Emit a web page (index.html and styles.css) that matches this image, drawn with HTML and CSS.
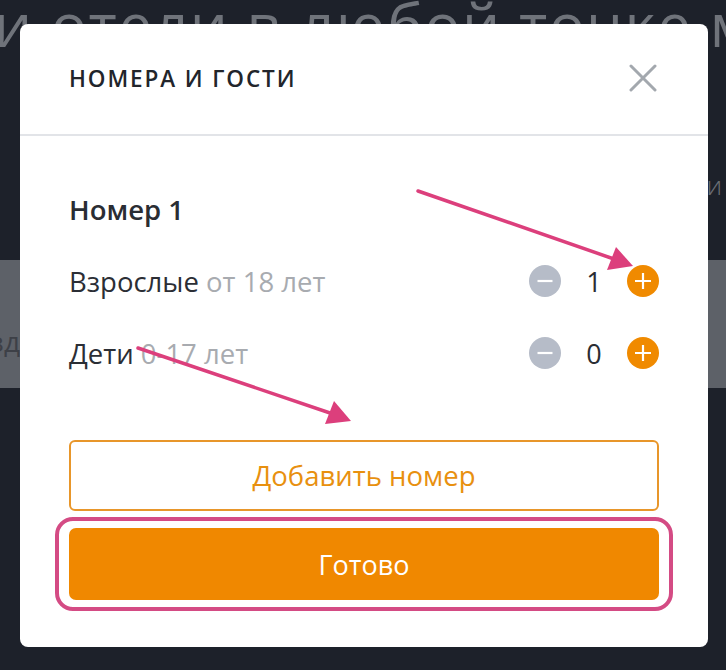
FILE: index.html
```html
<!DOCTYPE html>
<html lang="ru">
<head>
<meta charset="utf-8">
<title>Номера и гости</title>
<link rel="stylesheet" href="styles.css">
</head>
<body>
<div class="page">
  <h1 class="hero-title">и отели в любой точке мира</h1>
  <div class="hero-sub"><div class="hero-sub-inner"><span>Бронируйте отели без комиссии</span></div></div>
  <div class="search-band"><div class="band-field"><span>Выезд</span></div></div>
</div>

<div class="modal">
  <div class="modal-header">
    <h2 class="modal-title">НОМЕРА И ГОСТИ</h2>
    <button class="close" aria-label="Закрыть">
      <svg width="28" height="28" viewBox="0 0 28 28"><path d="M2 2 L26 26 M26 2 L2 26" stroke="#a3a8ae" stroke-width="3" stroke-linecap="round" fill="none"/></svg>
    </button>
  </div>
  <div class="modal-body">
    <div class="room-title">Номер 1</div>
    <div class="guest-row">
      <div class="guest-label">Взрослые <span class="guest-age">от 18 лет</span></div>
      <div class="counter">
        <span class="btn-round minus"><svg width="32" height="32" viewBox="0 0 32 32"><path d="M8.5 16 H23.5" stroke="#fff" stroke-width="2.2"/></svg></span>
        <span class="count">1</span>
        <span class="btn-round plus"><svg width="32" height="32" viewBox="0 0 32 32"><path d="M8 16 H24 M16 8 V24" stroke="#fff" stroke-width="2.2"/></svg></span>
      </div>
    </div>
    <div class="guest-row">
      <div class="guest-label">Дети <span class="guest-age">0-17 лет</span></div>
      <div class="counter">
        <span class="btn-round minus"><svg width="32" height="32" viewBox="0 0 32 32"><path d="M8.5 16 H23.5" stroke="#fff" stroke-width="2.2"/></svg></span>
        <span class="count">0</span>
        <span class="btn-round plus"><svg width="32" height="32" viewBox="0 0 32 32"><path d="M8 16 H24 M16 8 V24" stroke="#fff" stroke-width="2.2"/></svg></span>
      </div>
    </div>
    <button class="btn-outline">Добавить номер</button>
    <div class="highlight">
      <button class="btn-primary">Готово</button>
    </div>
  </div>
</div>

<svg class="annotations" width="726" height="670" viewBox="0 0 726 670">
  <line x1="418" y1="191" x2="614" y2="259" stroke="#dc3f7c" stroke-width="3.5" stroke-linecap="round"/>
  <polygon points="633,266 607,270 616,247" fill="#dc3f7c"/>
  <line x1="138" y1="348" x2="333" y2="414" stroke="#dc3f7c" stroke-width="3.5" stroke-linecap="round"/>
  <polygon points="351,421 325,424 334,401" fill="#dc3f7c"/>
</svg>
</body>
</html>
```

FILE: styles.css
```css
* { box-sizing: border-box; }

html, body {
  margin: 0;
  padding: 0;
}

body {
  width: 726px;
  height: 670px;
  overflow: hidden;
  background: #1d212a;
  font-family: "Open Sans", "Noto Sans", sans-serif;
  position: relative;
}

.page {
  width: 726px;
  overflow: hidden;
}

.hero-title {
  margin: -6px 0 0 -6px;
  font-weight: 400;
  font-size: 60px;
  line-height: 60px;
  height: 60px;
  color: #6f737a;
  white-space: nowrap;
  letter-spacing: 1.6px;
}

.hero-sub {
  height: 206px;
  padding-top: 115px;
  display: flex;
}

.hero-sub-inner {
  width: 722px;
  display: flex;
  justify-content: flex-end;
  white-space: nowrap;
  font-size: 26px;
  line-height: 32px;
  color: #6b6f76;
  font-weight: 300;
}

.search-band {
  height: 128px;
  background: #5d6168;
  display: flex;
  align-items: center;
  padding-top: 34px;
}

.band-field {
  width: 20px;
  display: flex;
  justify-content: flex-end;
  white-space: nowrap;
  font-size: 28px;
  color: #3d4047;
}

.modal {
  position: absolute;
  left: 20px;
  top: 24px;
  width: 688px;
  height: 623px;
  background: #fff;
  border-radius: 8px;
  overflow: hidden;
}

.modal-header {
  height: 112px;
  border-bottom: 2px solid #e2e4e8;
  display: flex;
  align-items: center;
  justify-content: space-between;
  padding: 0 43px 2px 49px;
}

.modal-title {
  margin: 0;
  font-size: 22.5px;
  font-weight: 600;
  letter-spacing: 1.9px;
  color: #22252b;
}

.close {
  border: 0;
  background: none;
  padding: 8px;
  display: flex;
}

.modal-body {
  padding: 58px 49px 0;
}

.room-title {
  font-size: 27.5px;
  line-height: 32px;
  font-weight: 600;
  color: #2a2d33;
  margin-bottom: 19px;
}

.guest-row {
  height: 72px;
  display: flex;
  align-items: center;
  justify-content: space-between;
}

.guest-label {
  font-size: 27.5px;
  color: #2b2e35;
}

.guest-age {
  color: #a8abb0;
}

.counter {
  display: flex;
  align-items: center;
}

.btn-round {
  width: 32px;
  height: 32px;
  border-radius: 50%;
  display: flex;
}

.minus { background: #b6bcc8; }
.plus { background: #f08a00; }

.count {
  width: 66px;
  text-align: center;
  font-size: 27px;
  color: #2a2d33;
}

.btn-outline {
  display: block;
  width: 100%;
  height: 71px;
  margin-top: 51px;
  border: 2px solid #e8962a;
  border-radius: 6px;
  background: #fff;
  color: #e8900f;
  font-family: inherit;
  font-size: 27.5px;
}

.highlight {
  margin: 6px -14px 0;
  border: 4px solid #d44b84;
  border-radius: 18px;
  padding: 7px 10px;
}

.btn-primary {
  display: block;
  width: 100%;
  height: 72px;
  border: 0;
  border-radius: 7px;
  background: #f08800;
  color: #fff;
  font-family: inherit;
  font-size: 27px;
}

.annotations {
  position: absolute;
  left: 0;
  top: 0;
  pointer-events: none;
}
```
